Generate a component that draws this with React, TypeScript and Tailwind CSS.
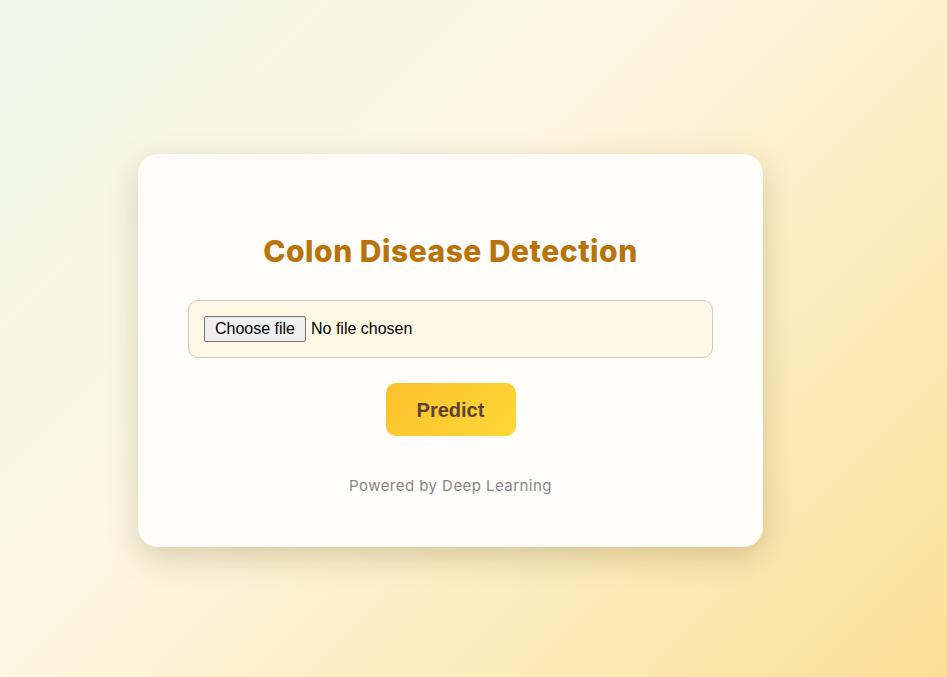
import React from 'react';

const App: React.FC = () => {
  return (
    <div className="min-h-[677px] w-full bg-[linear-gradient(135deg,#f0f8e8_0%,#fdf7e2_40%,#fbdf96_100%)] pl-[138px] pt-[154px] font-['Liberation_Sans',Arial,sans-serif]">
      {/* Card */}
      <div className="flex w-[625px] flex-col items-center rounded-[20px] bg-[#fffdfa] px-[50px] py-[50px] shadow-[0_10px_30px_rgba(120,100,40,0.28)]">
        <h1 className="mt-[29px] text-[30px] leading-[36px] font-extrabold tracking-[0.5px] text-[#b8730a] font-['Inter',sans-serif]">
          Colon Disease Detection
        </h1>

        {/* file picker, drawn like the browser's native one */}
        <label className="mt-[31px] flex h-[58px] w-full cursor-pointer items-center rounded-[10px] border border-[#cfcac0] bg-[#fff8e6] px-[15px] text-[16px] text-black">
          <input type="file" className="hidden" />
          <span className="flex h-[26px] w-[102px] items-center justify-center rounded-[2px] border border-[#767676] bg-[#efefef] leading-none">
            Choose file
          </span>
          <span className="ml-[5px]">No file chosen</span>
        </label>

        <button className="mt-[25px] h-[53px] w-[130px] rounded-[10px] bg-[linear-gradient(135deg,#fbc02d,#fdd835)] text-[20px] font-bold text-[#5d4037]">
          Predict
        </button>

        <p className="mt-[39px] text-[15px] leading-[22px] tracking-[0.45px] text-[#858585] font-['Inter',sans-serif]">
          Powered by Deep Learning
        </p>
      </div>
    </div>
  );
};

export default App;
